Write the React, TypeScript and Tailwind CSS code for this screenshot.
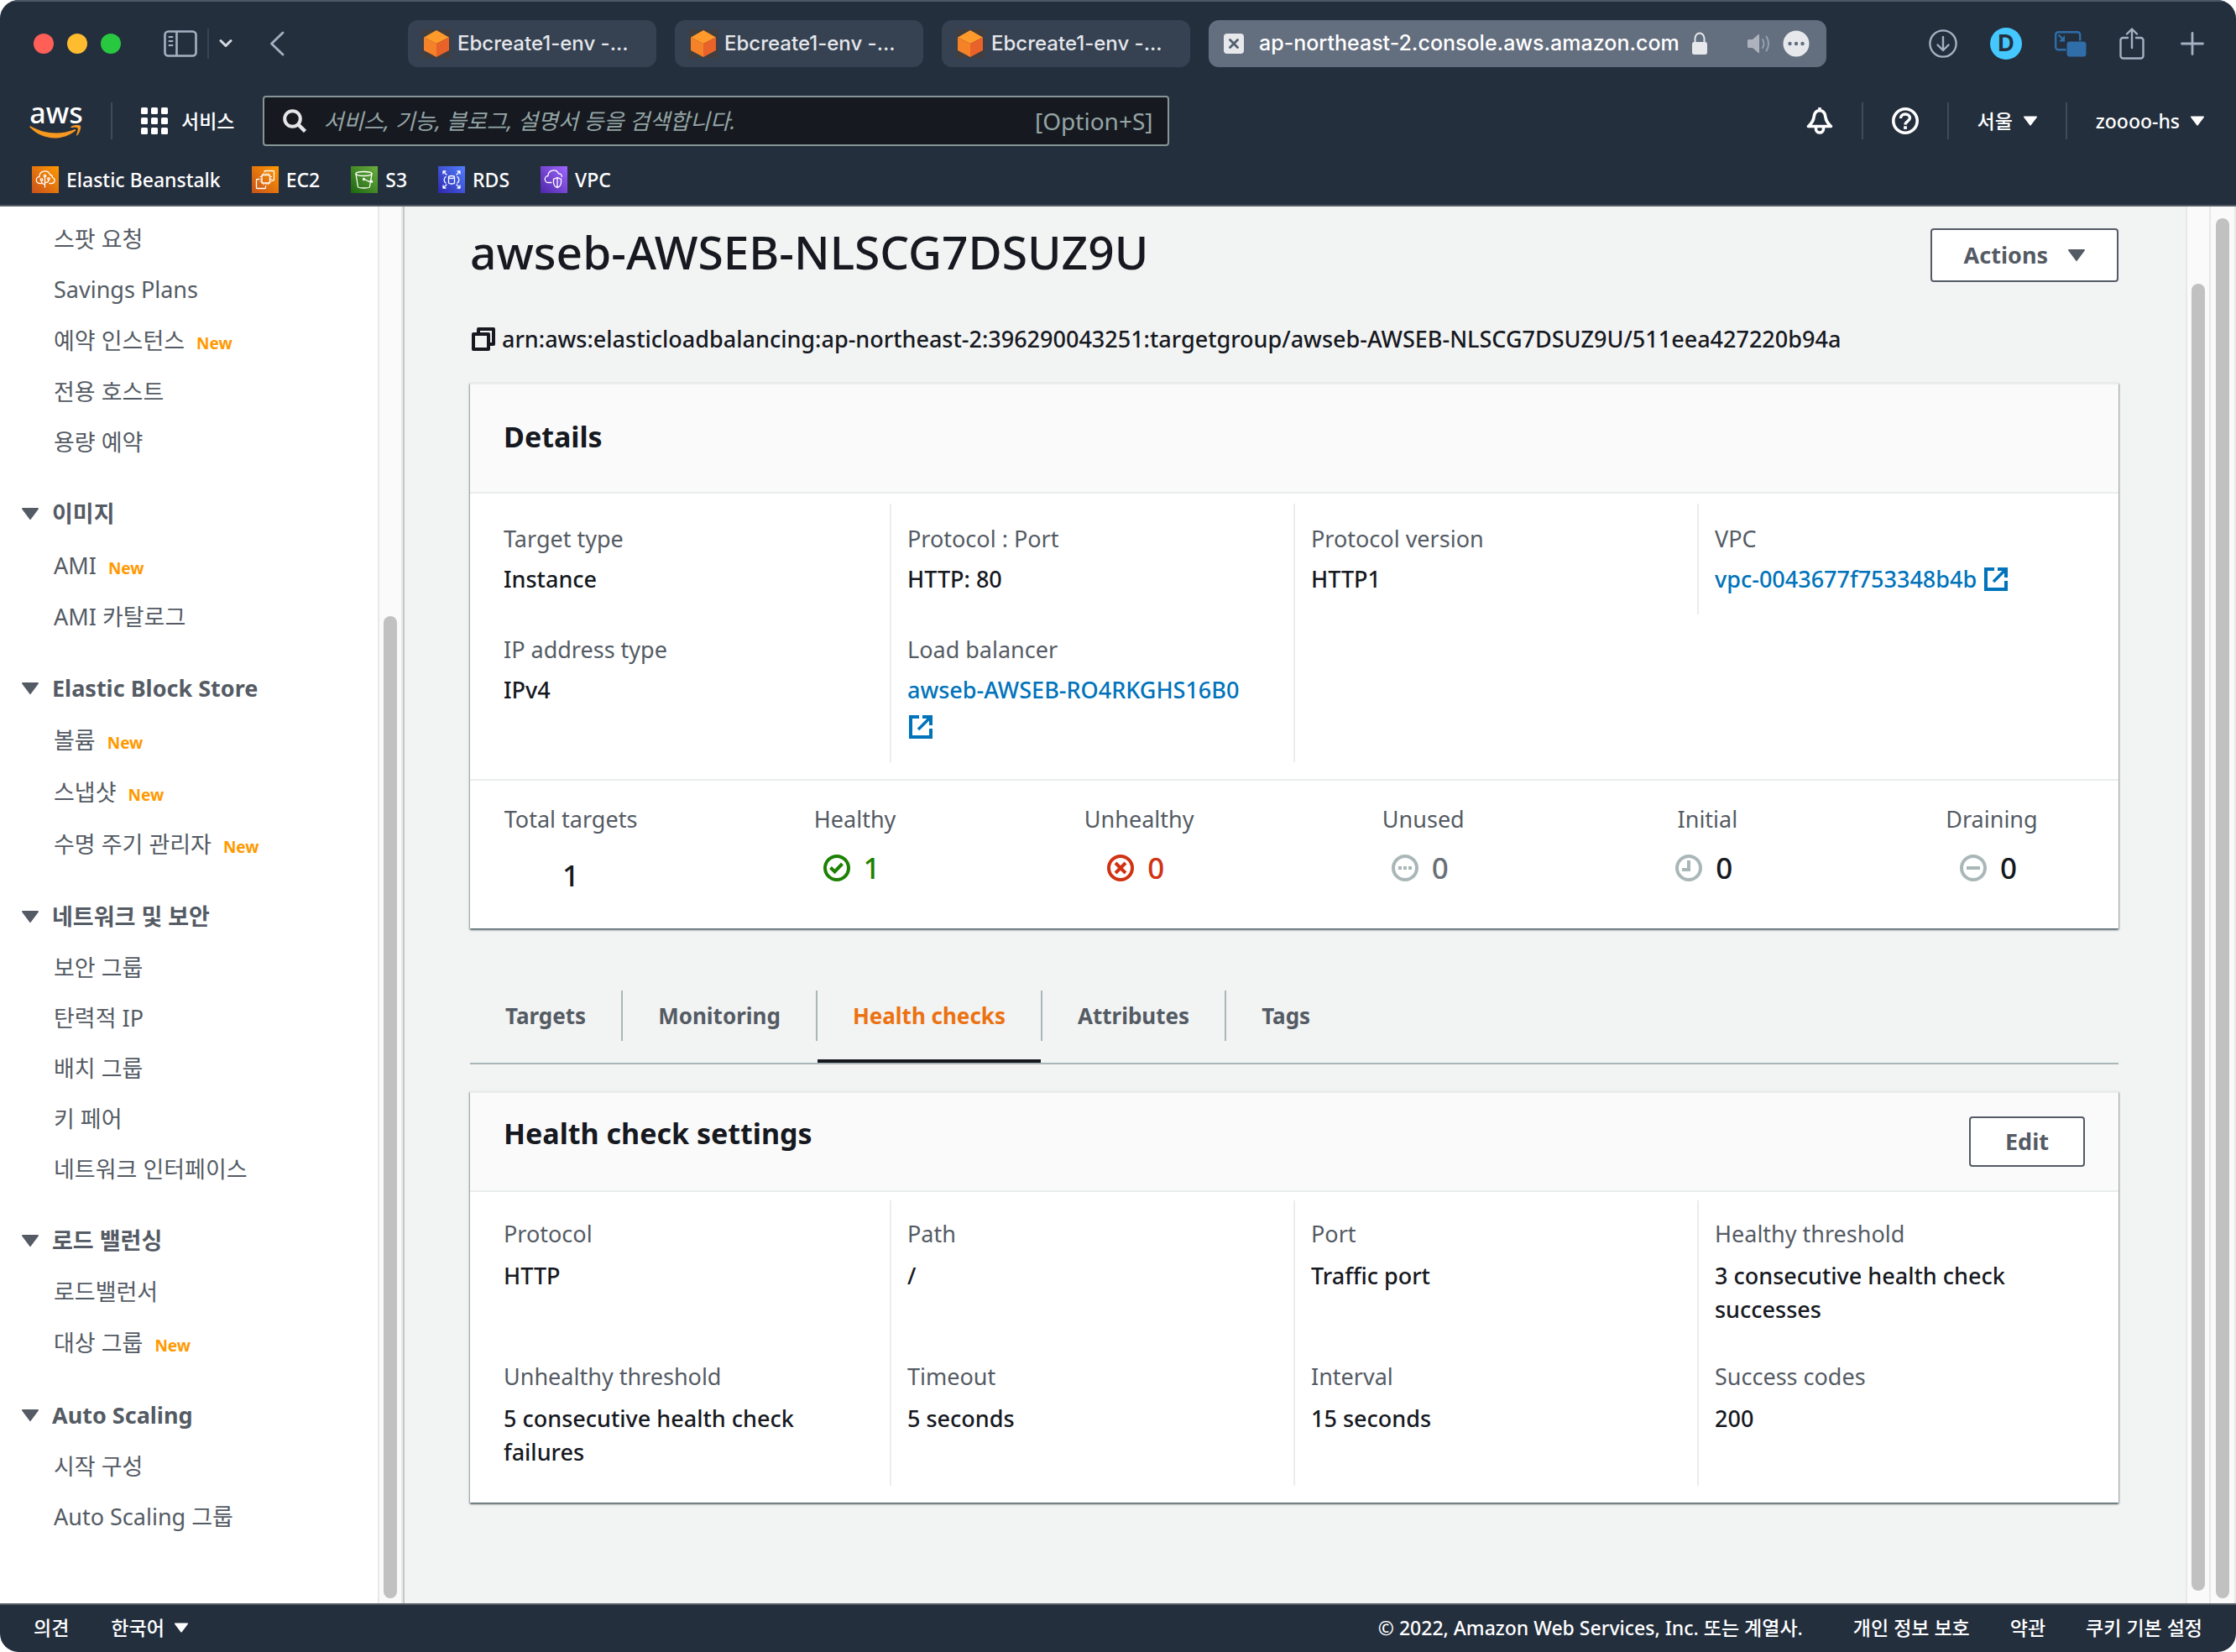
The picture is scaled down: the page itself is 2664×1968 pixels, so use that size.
import React from "react";
import type { ReactNode } from "react";

type IconProps = { className?: string };

/* ---------- generic glyphs ---------- */

function Caret({ className = "" }: IconProps) {
  return (
    <svg viewBox="0 0 20 14" className={className} fill="currentColor" aria-hidden="true">
      <path d="M1 0h18a1 1 0 0 1 .8 1.6l-9 12a1 1 0 0 1-1.6 0l-9-12A1 1 0 0 1 1 0z" />
    </svg>
  );
}

function ExternalIcon({ className = "" }: IconProps) {
  return (
    <svg viewBox="0 0 28 28" className={className} fill="none" stroke="currentColor" strokeWidth="4" aria-hidden="true">
      <path d="M12 2H2v24h24V16" />
      <path d="M16 2h10v10" />
      <path d="M25 3 11 17" strokeWidth="3.5" />
    </svg>
  );
}

function CopyIcon({ className = "" }: IconProps) {
  return (
    <svg viewBox="0 0 28 28" className={className} fill="none" stroke="currentColor" strokeWidth="4" strokeLinejoin="round" aria-hidden="true">
      <path d="M2 8h18v18H2z" />
      <path d="M8 8V2h18v18h-6" />
    </svg>
  );
}

/* ---------- browser toolbar glyphs ---------- */

function CubeIcon({ className = "" }: IconProps) {
  return (
    <svg viewBox="0 0 34 34" className={className} aria-hidden="true">
      <rect width="34" height="34" fill="#403e3f" />
      <path d="M17 1 32 9.5 17 17 2 9.5z" fill="#ff9a2b" />
      <path d="M2 9.5 17 17v16L2 25z" fill="#f58228" />
      <path d="M32 9.5 17 17v16l15-8z" fill="#e8622a" />
    </svg>
  );
}

function SidebarIcon() {
  return (
    <svg viewBox="0 0 40 32" className="h-8 w-10" fill="none" stroke="#a5b1c2" strokeWidth="2.6" strokeLinecap="round" aria-hidden="true">
      <rect x="1.5" y="1.5" width="37" height="29" rx="4" />
      <path d="M15.5 2v28" />
      <path d="M6.5 8h4M6.5 13h4M6.5 18h4" strokeWidth="2" />
    </svg>
  );
}

function SpeakerIcon() {
  return (
    <svg viewBox="0 0 28 24" className="h-6 w-7" aria-hidden="true">
      <path d="M0 8.5Q0 7 1.5 7H6l7-6q1-.7 1 .6v20.8q0 1.300-1 .6L6 17H1.5Q0 17 0 15.5z" fill="#adb3bd" />
      <path d="M18 7q3 5 0 10M22.5 3.5q5 8.500 0 17" fill="none" stroke="#97a0ad" strokeWidth="2" strokeLinecap="round" />
    </svg>
  );
}

function MoreIcon() {
  return (
    <svg viewBox="0 0 32 32" className="size-8" aria-hidden="true">
      <circle cx="16" cy="16" r="15.5" fill="#e6e8ec" />
      <circle cx="8.5" cy="16" r="2.2" fill="#626d7d" />
      <circle cx="16" cy="16" r="2.2" fill="#626d7d" />
      <circle cx="23.5" cy="16" r="2.2" fill="#626d7d" />
    </svg>
  );
}

function LockIcon() {
  return (
    <svg viewBox="0 0 20 28" className="h-7 w-5" aria-hidden="true">
      <path d="M4.500 13V8a5.500 6.500 0 0 1 11 0v5" fill="none" stroke="#e6e8ec" strokeWidth="2" />
      <rect x="1" y="12" width="18" height="15" rx="2.5" fill="#e6e8ec" />
    </svg>
  );
}

function DownloadIcon() {
  return (
    <svg viewBox="0 0 34 34" className="size-[34px]" fill="none" stroke="#a5b1c2" strokeWidth="2.4" strokeLinecap="round" strokeLinejoin="round" aria-hidden="true">
      <circle cx="17" cy="17" r="15.6" />
      <path d="M17 9v16M10.500 18.500 17 25l6.500-6.500" />
    </svg>
  );
}

function PipIcon() {
  return (
    <svg viewBox="0 0 38 32" className="h-8 w-[38px]" aria-hidden="true">
      <rect x="1.2" y="2.2" width="29" height="21" rx="3" fill="none" stroke="#2f6ea8" strokeWidth="2.4" />
      <path d="m5 6 5 5" stroke="#2f6ea8" strokeWidth="2.2" strokeLinecap="round" />
      <path d="M12 6v7.500H5z" fill="#2f6ea8" />
      <rect x="13.5" y="12.5" width="24.5" height="19.5" rx="4" fill="#242f3e" />
      <rect x="14.5" y="13.5" width="23" height="18" rx="3.5" fill="#2f6ea8" />
    </svg>
  );
}

function ShareIcon() {
  return (
    <svg viewBox="0 0 30 38" className="h-[38px] w-[30px]" fill="none" stroke="#a5b1c2" strokeWidth="2.4" strokeLinecap="round" strokeLinejoin="round" aria-hidden="true">
      <path d="M10 12H4.500a3 3 0 0 0-3 3v18.500a3 3 0 0 0 3 3h21a3 3 0 0 0 3-3V15a3 3 0 0 0-3-3H20" />
      <path d="M15 24V2M9 7.500 15 1.500l6 6" />
    </svg>
  );
}

function PlusIcon() {
  return (
    <svg viewBox="0 0 28 28" className="size-7" stroke="#a5b1c2" strokeWidth="2.8" strokeLinecap="round" aria-hidden="true">
      <path d="M14 1.500v25M1.500 14h25" />
    </svg>
  );
}

/* ---------- console navigation glyphs ---------- */

function AwsLogo() {
  return (
    <a href="#home" aria-label="AWS" className="flex h-12 w-16 flex-col items-center text-white">
      <span className="text-[34px] leading-7 font-medium">aws</span>
      <svg viewBox="0 0 64 20" className="h-5 w-16" fill="#f7981f" aria-hidden="true">
        <path d="M0.500 3.500c-.6-.8.2-1.500 1.200-1 9 5 19 8 30 8 7.500 0 15-1.500 22-4.300 1.300-.5 2.200.7 1 1.700C47 13.500 38.500 16.500 30.500 16.500 19 16.500 8 11.500 0.500 3.500z" />
        <path d="M57.500 4.500c-1-1.300-6-.7-8-.4-.7.100-.8-.5-.2-.9C53.500.2 60 1 60.900 2c.8 1-.2 8-4 11.300-.6.5-1.200.2-.9-.4.900-2.200 2.500-7.100 1.500-8.400z" />
      </svg>
    </a>
  );
}

function GridIcon() {
  const steps = [0, 12, 24];
  return (
    <svg viewBox="0 0 32 32" className="size-8" fill="white" aria-hidden="true">
      {steps.map((y) => steps.map((x) => <rect key={`${x}-${y}`} x={x} y={y} width="8" height="8" rx="1.5" />))}
    </svg>
  );
}

function SearchIcon() {
  return (
    <svg viewBox="0 0 28 28" className="size-7" fill="none" stroke="#e4e6e8" strokeWidth="4" aria-hidden="true">
      <circle cx="11.5" cy="11.5" r="9.3" />
      <path d="m18 18 8.500 8.500" strokeWidth="4.5" />
    </svg>
  );
}

function BellIcon() {
  return (
    <svg viewBox="0 0 32 32" className="size-8" fill="none" stroke="white" strokeWidth="3.6" strokeLinejoin="round" aria-hidden="true">
      <path d="M16 3.800c-4.500 0-6.300 3-6.800 7.200C8.700 15.500 6.500 19 2.500 22.500h27C25.500 19 23.300 15.500 22.800 11c-.5-4.200-2.300-7.200-6.800-7.200z" />
      <path d="M16 0v4" />
      <path d="M11.500 23v2.500a4.500 4.500 0 0 0 9 0V23" />
    </svg>
  );
}

function HelpIcon() {
  return (
    <svg viewBox="0 0 32 32" className="size-8" fill="none" stroke="white" strokeWidth="3.6" aria-hidden="true">
      <circle cx="16" cy="16" r="14.2" />
      <path d="M10.500 13c0-3.300 2.300-5 5.500-5s5.500 1.900 5.500 4.600c0 3.700-5.500 3.900-5.500 7.900" strokeWidth="3.4" />
      <path d="M16 22.300v3.600" strokeWidth="3.8" />
    </svg>
  );
}

/* ---------- pinned service tiles ---------- */

function ServiceTile({ id, from, to, children }: { id: string; from: string; to: string; children: ReactNode }) {
  return (
    <svg viewBox="0 0 32 32" className="size-8" aria-hidden="true">
      <defs>
        <linearGradient id={id} x1="0" y1="1" x2="1" y2="0">
          <stop offset="0" stopColor={from} />
          <stop offset="1" stopColor={to} />
        </linearGradient>
      </defs>
      <rect width="32" height="32" fill={`url(#${id})`} />
      <g fill="none" stroke="white" strokeWidth="1.3" strokeLinecap="round" strokeLinejoin="round">
        {children}
      </g>
    </svg>
  );
}

const services: { name: string; tile: ReactNode }[] = [
  {
    name: "Elastic Beanstalk",
    tile: (
      <ServiceTile id="beanstalk" from="#c8511b" to="#ff9900">
        <path d="M11 20.500H9.500a4 4 0 0 1-.5-8 6.500 6.500 0 0 1 12.500-2.500 3.500 3.500 0 0 1 3 3.500 3.600 3.600 0 0 1-.5 7H21" />
        <path d="M15.500 25V12.500M15.500 21.500c-3 0-4-1.500-4-4M15.500 19.500c3 0 4.500-1 4.500-3" />
        <circle cx="11.5" cy="16" r="1.3" />
        <circle cx="15.5" cy="11.5" r="1.3" />
        <circle cx="20" cy="15" r="1.3" />
      </ServiceTile>
    ),
  },
  {
    name: "EC2",
    tile: (
      <ServiceTile id="ec2" from="#c8511b" to="#ff9900">
        <path d="M15 7V6.500a1 1 0 0 1 1-1h9.500a1 1 0 0 1 1 1V16a1 1 0 0 1-1 1H24" />
        <path d="M8.500 15.500h-2a1 1 0 0 0-1 1v9a1 1 0 0 0 1 1h9a1 1 0 0 0 1-1V24" />
        <rect x="12" y="10.5" width="9.5" height="9.5" />
        <path d="M14 10.500V8.500M17 10.500V8.500M19.500 10.500V8.500M14 20v2M17 20v2M19.500 20v2M12 12.500h-2M12 15.300h-2M12 18h-2M21.500 12.500h2M21.500 15.300h2M21.500 18h2" strokeWidth="1" />
      </ServiceTile>
    ),
  },
  {
    name: "S3",
    tile: (
      <ServiceTile id="s3" from="#1b660f" to="#6cae3e">
        <ellipse cx="15.5" cy="9" rx="9.5" ry="2.5" />
        <path d="m6 9 2.500 15.500c.3 2 13.700 2 14 0L25 9" />
        <circle cx="15.5" cy="15.5" r="1" />
        <path d="M16.500 15.800c3 1.800 6 3 9 3.200.8-.5-.5-1.700-1.800-2.500" />
      </ServiceTile>
    ),
  },
  {
    name: "RDS",
    tile: (
      <ServiceTile id="rds" from="#2e27ad" to="#527fff">
        <path d="M6 6l4 4M6 9V6h3M26 6l-4 4M23 6h3v3M6 26l4-4M6 23v3h3M26 26l-4-4M23 26h3v-3" />
        <ellipse cx="16" cy="13" rx="3.5" ry="1.5" />
        <path d="M12.500 13v6.500c0 2 7 2 7 0V13M9 12.500c-2.500 2-2.500 5.500 0 7.500M23 12.500c2.500 2 2.500 5.500 0 7.500" />
      </ServiceTile>
    ),
  },
  {
    name: "VPC",
    tile: (
      <ServiceTile id="vpc" from="#4d27a8" to="#a166ff">
        <path d="M13 19.500H9.500a4 4 0 0 1-.5-8 6.500 6.500 0 0 1 12.500-2.500 3.500 3.500 0 0 1 4 3.500" />
        <path d="m20 13.500 4.500 1.800v4c0 3.500-2 5.200-4.500 6.200-2.500-1-4.500-2.700-4.500-6.200v-4zM20 13.500v12" />
      </ServiceTile>
    ),
  },
];

/* ---------- top chrome ---------- */

function BrowserBar() {
  return (
    <div className="flex h-[100px] items-center pr-[38px] pl-10">
      <div className="flex items-center gap-4">
        <span className="size-6 rounded-full bg-[#ff5f57]" />
        <span className="size-6 rounded-full bg-[#febc2e]" />
        <span className="size-6 rounded-full bg-[#28c840]" />
      </div>
      <button type="button" aria-label="Sidebar" className="ml-[51px]">
        <SidebarIcon />
      </button>
      <span className="ml-3 h-9 w-[2px] bg-[#394453]" />
      <button type="button" aria-label="Tab groups" className="ml-3">
        <svg viewBox="0 0 16 12" className="h-3 w-4" fill="none" stroke="#d5dae2" strokeWidth="3" strokeLinecap="round" strokeLinejoin="round">
          <path d="m2 2.500 6 6 6-6" />
        </svg>
      </button>
      <button type="button" aria-label="Back" className="ml-11">
        <svg viewBox="0 0 18 30" className="h-[30px] w-[18px]" fill="none" stroke="#a5b1c2" strokeWidth="2.8" strokeLinecap="round" strokeLinejoin="round">
          <path d="M16 2 2.500 15 16 28" />
        </svg>
      </button>
      <div className="ml-[147px] flex flex-1 gap-[22px] font-[Inter,'Noto_Sans_CJK_KR',sans-serif]">
        {["a", "b", "c"].map((key) => (
          <button key={key} type="button" className="flex h-14 w-[296px] items-center gap-2 rounded-xl bg-[#364151] pl-[17px] text-[24px] font-medium text-[#e4e7eb]">
            <CubeIcon className="size-[34px]" />
            Ebcreate1-env -...
          </button>
        ))}
        <div className="flex h-14 w-[736px] items-center rounded-xl bg-[#636e7e] pr-5 pl-[18px] text-[25px] font-medium text-white">
          <button type="button" aria-label="Close tab" className="flex size-6 items-center justify-center rounded bg-[#e6e8ec]">
            <svg viewBox="0 0 12 12" className="size-3" stroke="#535e6e" strokeWidth="2.8" strokeLinecap="round">
              <path d="m1.500 1.500 9 9M10.500 1.500l-9 9" />
            </svg>
          </button>
          <span className="ml-[18px]">ap-northeast-2.console.aws.amazon.com</span>
          <span className="ml-3.5">
            <LockIcon />
          </span>
          <span className="ml-auto flex items-center gap-3.5">
            <SpeakerIcon />
            <MoreIcon />
          </span>
        </div>
      </div>
      <div className="flex items-center gap-[39px]">
        <DownloadIcon />
        <span className="flex size-[38px] items-center justify-center rounded-full bg-[#45c8ff] font-[Inter,sans-serif] text-[27px] font-bold text-[#242f3e]">D</span>
        <PipIcon />
        <ShareIcon />
        <span className="ml-1">
          <PlusIcon />
        </span>
      </div>
    </div>
  );
}

function NavDivider() {
  return <span className="block h-11 w-[2px] bg-[#414a57]" />;
}

function ConsoleNav() {
  return (
    <nav className="flex h-[84px] items-center pr-[38px] pl-[35px] text-[23px] font-medium text-white">
      <AwsLogo />
      <span className="ml-[33px]">
        <NavDivider />
      </span>
      <button type="button" className="ml-[34px] flex items-center gap-4">
        <GridIcon />
        서비스
      </button>
      <label className="ml-[34px] flex h-[60px] w-[1080px] items-center rounded border-2 border-[#879596] bg-[#161a20] pr-[18px] pl-[22px] text-[26px] font-normal text-[#95a5a6]">
        <SearchIcon />
        <input
          type="text"
          aria-label="검색"
          placeholder="서비스, 기능, 블로그, 설명서 등을 검색합니다."
          className="ml-5 min-w-0 flex-1 bg-transparent outline-none placeholder:text-[#95a5a6] placeholder:italic"
        />
        <span className="text-[28px]">[Option+S]</span>
      </label>
      <div className="ml-auto flex items-center gap-[34px]">
        <button type="button" aria-label="Notifications">
          <BellIcon />
        </button>
        <NavDivider />
        <button type="button" aria-label="Help">
          <HelpIcon />
        </button>
        <NavDivider />
        <button type="button" className="flex items-center gap-[13px]">
          서울
          <Caret className="h-3.5 w-4" />
        </button>
        <NavDivider />
        <button type="button" className="flex items-center gap-[13px]">
          zoooo-hs
          <Caret className="h-3.5 w-4" />
        </button>
      </div>
    </nav>
  );
}

function PinnedServices() {
  return (
    <div className="flex h-14 items-center gap-[37px] pl-[38px] text-[23px] font-medium text-white">
      {services.map((s) => (
        <a key={s.name} href={`#${s.name}`} className="flex items-center gap-[9px]">
          {s.tile}
          {s.name}
        </a>
      ))}
    </div>
  );
}

/* ---------- sidebar ---------- */

type NavItem = { label: string; isNew?: boolean };
type NavSection = { title?: string; items: NavItem[] };

const sections: NavSection[] = [
  {
    items: [
      { label: "스팟 요청" },
      { label: "Savings Plans" },
      { label: "예약 인스턴스", isNew: true },
      { label: "전용 호스트" },
      { label: "용량 예약" },
    ],
  },
  { title: "이미지", items: [{ label: "AMI", isNew: true }, { label: "AMI 카탈로그" }] },
  {
    title: "Elastic Block Store",
    items: [
      { label: "볼륨", isNew: true },
      { label: "스냅샷", isNew: true },
      { label: "수명 주기 관리자", isNew: true },
    ],
  },
  {
    title: "네트워크 및 보안",
    items: [
      { label: "보안 그룹" },
      { label: "탄력적 IP" },
      { label: "배치 그룹" },
      { label: "키 페어" },
      { label: "네트워크 인터페이스" },
    ],
  },
  { title: "로드 밸런싱", items: [{ label: "로드밸런서" }, { label: "대상 그룹", isNew: true }] },
  { title: "Auto Scaling", items: [{ label: "시작 구성" }, { label: "Auto Scaling 그룹" }] },
];

function Sidebar() {
  return (
    <aside className="flex w-[482px] shrink-0 overflow-hidden border-r-2 border-[#c3cacb] bg-white text-[27px] text-[#545b64]">
      <div className="flex-1 pt-[9px]">
        {sections.map((section) => (
          <section key={section.title ?? "instances"} className="mb-6">
            {section.title && (
              <button type="button" className="flex h-[62px] items-center gap-4 pl-[26px] font-bold">
                <Caret className="h-4 w-5" />
                {section.title}
              </button>
            )}
            <ul>
              {section.items.map((item) => (
                <li key={item.label} className={item.isNew ? "flex h-[62px] items-center pl-16" : "flex h-[60px] items-center pl-16"}>
                  <span className="flex items-baseline gap-3.5">
                    <a href="#nav">{item.label}</a>
                    {item.isNew && <span className="text-[19px] font-bold text-[#ff9900]">New</span>}
                  </span>
                </li>
              ))}
            </ul>
          </section>
        ))}
      </div>
      <ScrollTrack className="w-[30px] border-x-2 pt-[488px] pb-1.5" />
    </aside>
  );
}

function ScrollTrack({ className }: { className: string }) {
  return (
    <div className={`flex justify-center border-[#e8e8e8] bg-[#fafafa] ${className}`}>
      <span className="w-4 rounded-full bg-[#c1c1c1]" />
    </div>
  );
}

/* ---------- main content ---------- */

const cardShadow = "shadow-[0_2px_2px_rgba(0,28,36,0.5),1px_1px_2px_rgba(0,28,36,0.25),-1px_1px_2px_rgba(0,28,36,0.25)]";

function Card({ children, className = "" }: { children: ReactNode; className?: string }) {
  return <section className={`border-t-2 border-[#eaeded] bg-white ${cardShadow} ${className}`}>{children}</section>;
}

type Field = { label: string; value: ReactNode };

function ResourceLink({ children }: { children: ReactNode }) {
  return (
    <a href="#resource" className="text-[#0073bb]">
      {children} <ExternalIcon className="mx-0.5 inline size-7 align-[-4px]" />
    </a>
  );
}

const details: (Field | null)[] = [
  { label: "Target type", value: "Instance" },
  { label: "Protocol : Port", value: "HTTP: 80" },
  { label: "Protocol version", value: "HTTP1" },
  { label: "VPC", value: <ResourceLink>vpc-0043677f753348b4b</ResourceLink> },
  { label: "IP address type", value: "IPv4" },
  { label: "Load balancer", value: <ResourceLink>awseb-AWSEB-RO4RKGHS16B0</ResourceLink> },
  null,
];

const healthSettings: Field[] = [
  { label: "Protocol", value: "HTTP" },
  { label: "Path", value: "/" },
  { label: "Port", value: "Traffic port" },
  { label: "Healthy threshold", value: "3 consecutive health check successes" },
  { label: "Unhealthy threshold", value: "5 consecutive health check failures" },
  { label: "Timeout", value: "5 seconds" },
  { label: "Interval", value: "15 seconds" },
  { label: "Success codes", value: "200" },
];

function FieldGrid({ fields, roomy = false }: { fields: (Field | null)[]; roomy?: boolean }) {
  return (
    <dl className={`grid grid-cols-4 pr-[21px] pb-5 pl-[19px] ${roomy ? "pt-2.5 leading-10" : "pt-3 leading-11"}`}>
      {fields.map((field, i) => (
        <div key={i} className={`border-l-2 py-5 pr-8 pl-[19px] ${i % 4 === 0 ? "border-transparent" : "border-[#eaeded]"}`}>
          {field && (
            <>
              <dt className="text-[#545b64]">{field.label}</dt>
              <dd className={`font-medium text-[#16191f] ${roomy ? "mt-2.5" : "mt-1"}`}>{field.value}</dd>
            </>
          )}
        </div>
      ))}
    </dl>
  );
}

function StatusRing({ className, children }: { className: string; children: ReactNode }) {
  return (
    <svg viewBox="0 0 32 32" className={`size-8 ${className}`} fill="none" stroke="currentColor" strokeWidth="4" aria-hidden="true">
      <circle cx="16" cy="16" r="14" />
      {children}
    </svg>
  );
}

const counts: { label: string; value: string; tone: string; icon: ReactNode }[] = [
  { label: "Total targets", value: "1", tone: "text-[#16191f] pt-[18px]", icon: null },
  {
    label: "Healthy",
    value: "1",
    tone: "text-[#1d8102] pr-2",
    icon: (
      <StatusRing className="text-[#1d8102]">
        <path d="m8.500 15.500 5 5 9-9.500" />
      </StatusRing>
    ),
  },
  {
    label: "Unhealthy",
    value: "0",
    tone: "text-[#d13212] pr-2",
    icon: (
      <StatusRing className="text-[#d13212]">
        <path d="m10 10 12 12M22 10 10 22" />
      </StatusRing>
    ),
  },
  {
    label: "Unused",
    value: "0",
    tone: "text-[#687078] pr-2",
    icon: (
      <StatusRing className="text-[#aab7b8]">
        <path d="M8 16h4M14 16h4M20 16h4" />
      </StatusRing>
    ),
  },
  {
    label: "Initial",
    value: "0",
    tone: "text-[#16191f] pr-2",
    icon: (
      <StatusRing className="text-[#aab7b8]">
        <path d="M16 7v11H8" />
      </StatusRing>
    ),
  },
  {
    label: "Draining",
    value: "0",
    tone: "text-[#16191f] pr-2",
    icon: (
      <StatusRing className="text-[#aab7b8]">
        <path d="M8 16h16" />
      </StatusRing>
    ),
  },
];

const tabs = ["Targets", "Monitoring", "Health checks", "Attributes", "Tags"];

function MainContent() {
  return (
    <main className="min-w-0 flex-1 overflow-hidden bg-[#f2f3f3] pr-20 pl-[78px] text-[27px] text-[#16191f]">
      <div className="flex items-start justify-between pt-[26px]">
        <h1 className="text-[55px] leading-[56px] font-medium">awseb-AWSEB-NLSCG7DSUZ9U</h1>
        <button type="button" className="flex h-16 items-center gap-6 rounded border-2 border-[#545b64] bg-white px-[38px] font-bold text-[#545b64]">
          Actions
          <Caret className="h-4 w-5" />
        </button>
      </div>

      <div className="mt-[46px] flex h-11 items-center gap-2 font-medium">
        <button type="button" aria-label="Copy ARN" className="ml-0.5">
          <CopyIcon className="size-7" />
        </button>
        arn:aws:elasticloadbalancing:ap-northeast-2:396290043251:targetgroup/awseb-AWSEB-NLSCG7DSUZ9U/511eea427220b94a
      </div>

      <Card className="mt-[30px]">
        <header className="border-b-2 border-[#eaeded] bg-[#fafafa] px-10 pt-[42px] pb-[46px]">
          <h2 className="text-[34px] leading-10 font-bold">Details</h2>
        </header>
        <FieldGrid fields={details} />
        <div className="flex justify-between border-t-2 border-[#eaeded] pt-6 pr-[71px] pb-[50px] pl-10">
          {counts.map((c) => (
            <div key={c.label} className="w-40 text-center">
              <p className="leading-11 whitespace-nowrap text-[#545b64]">{c.label}</p>
              <p className={`mt-3.5 flex h-11 items-center justify-center gap-4 text-[35px] font-medium ${c.tone}`}>
                {c.icon}
                {c.value}
              </p>
            </div>
          ))}
        </div>
      </Card>

      <div role="tablist" className="mt-[74px] flex border-b-2 border-[#aab7b8] text-[26px]">
        {tabs.map((tab, i) => {
          const active = tab === "Health checks";
          return (
            <React.Fragment key={tab}>
              {i > 0 && <span className="h-[60px] w-[2px] bg-[#aab7b8]" />}
              <button
                type="button"
                role="tab"
                aria-selected={active}
                className={`flex h-[86px] items-start border-b-4 px-[42px] leading-[60px] font-bold ${active ? "border-[#16191f] text-[#ec7211]" : "border-transparent text-[#545b64]"}`}
              >
                {tab}
              </button>
            </React.Fragment>
          );
        })}
      </div>

      <Card className="mt-8">
        <header className="flex items-start justify-between border-b-2 border-[#eaeded] bg-[#fafafa] px-10 py-7">
          <h2 className="text-[34px] leading-10 font-bold">Health check settings</h2>
          <button type="button" className="h-[60px] w-[138px] rounded border-2 border-[#545b64] bg-white font-bold text-[#545b64]">
            Edit
          </button>
        </header>
        <FieldGrid fields={healthSettings} roomy />
      </Card>
    </main>
  );
}

/* ---------- footer ---------- */

function Footer() {
  return (
    <footer className="flex h-[58px] shrink-0 items-center border-t-2 border-[#545b64] bg-[#242f3e] px-10 pb-0.5 text-[23px] font-medium text-white">
      <a href="#feedback">의견</a>
      <button type="button" className="ml-[50px] flex items-center gap-3">
        한국어
        <Caret className="h-3.5 w-4" />
      </button>
      <div className="ml-auto flex gap-12">
        <span className="mr-3">© 2022, Amazon Web Services, Inc. 또는 계열사.</span>
        <a href="#privacy">개인 정보 보호</a>
        <a href="#terms">약관</a>
        <a href="#cookies">쿠키 기본 설정</a>
      </div>
    </footer>
  );
}

export default function App() {
  return (
    <div className="bg-white">
      <div className="flex h-screen flex-col overflow-hidden rounded-[22px] font-['Noto_Sans','Noto_Sans_CJK_KR',sans-serif]">
        <header className="h-[246px] shrink-0 border-y-2 border-t-[#4b5866] border-b-[#545b64] bg-[#242f3e]">
          <BrowserBar />
          <ConsoleNav />
          <PinnedServices />
        </header>
        <div className="flex min-h-0 flex-1">
          <Sidebar />
          <MainContent />
          <ScrollTrack className="w-[30px] shrink-0 border-x-2 pt-[92px] pb-[15px]" />
          <ScrollTrack className="w-[30px] shrink-0 border-r-2 pt-3.5 pb-1.5" />
        </div>
        <Footer />
      </div>
    </div>
  );
}
